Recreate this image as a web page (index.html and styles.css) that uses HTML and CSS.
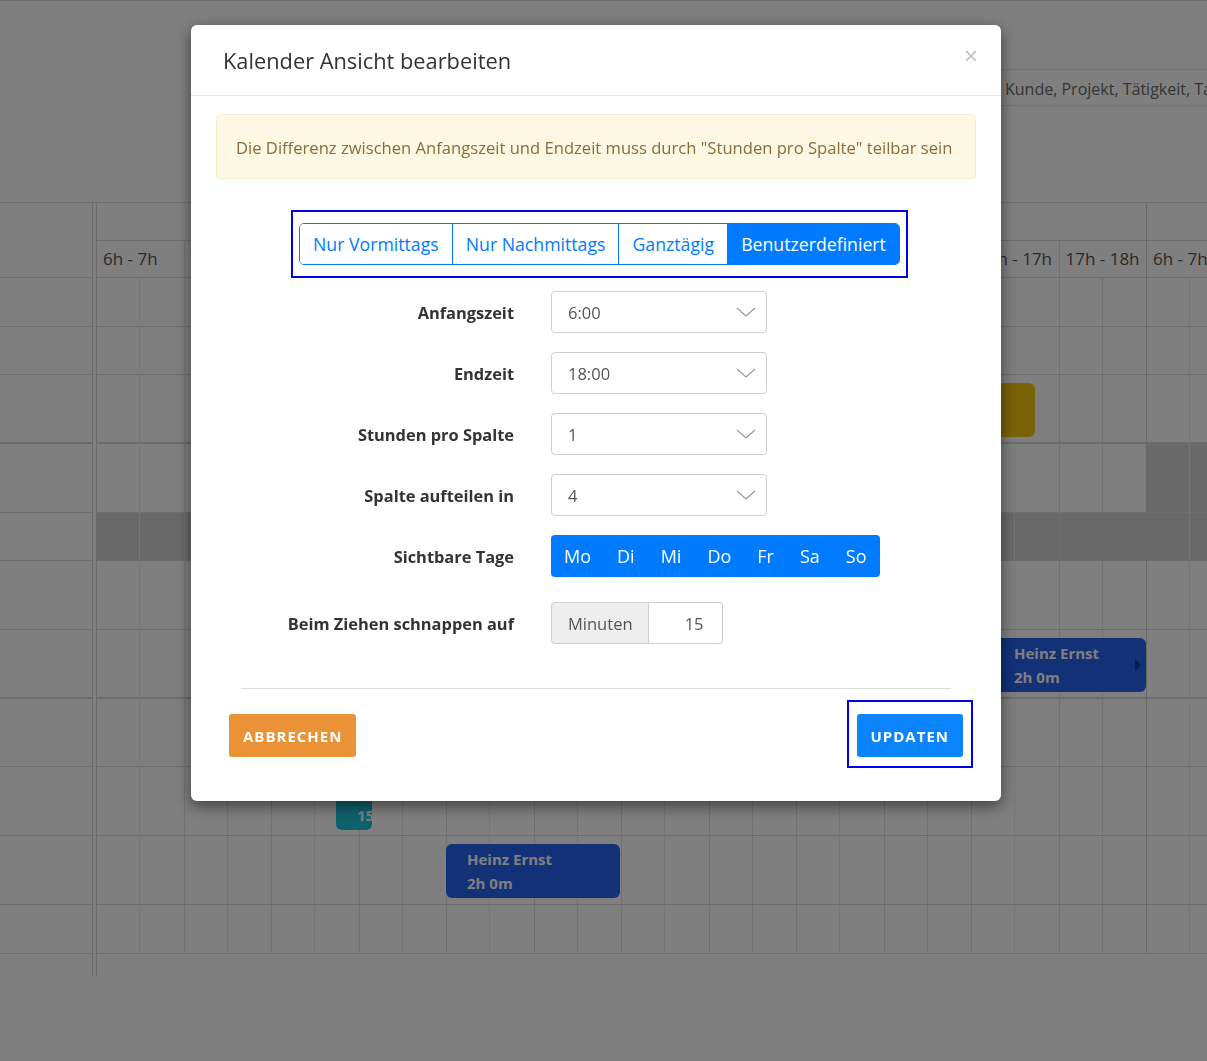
FILE: index.html
```html
<!DOCTYPE html>
<html lang="de">
<head>
    <meta charset="UTF-8">
    <meta name="viewport" content="width=device-width, initial-scale=1.0">
    <title>Kalender</title>
    <link rel="stylesheet" href="styles.css">
</head>
<body>
    <!-- Toolbar above the scheduler -->
    <div class="toolbar">
        <div class="group-select">Kunde, Projekt, Tätigkeit, Tag</div>
    </div>

    <!-- Scheduler: resource column, splitter, timeline -->
    <div class="scheduler">
        <div class="resources">
            <div class="res-head"></div>
            <div class="row h-49"></div>
            <div class="row h-48"></div>
            <div class="row h-69 group-end"></div>
            <div class="row h-69"></div>
            <div class="row h-48"></div>
            <div class="row h-69"></div>
            <div class="row h-69 group-end"></div>
            <div class="row h-68"></div>
            <div class="row h-69"></div>
            <div class="row h-69"></div>
            <div class="row h-49"></div>
        </div>
        <div class="splitter"></div>
        <div class="timeline">
            <div class="tl-head">
                <div class="days">
                    <div class="day"></div>
                    <div class="day"></div>
                </div>
                <div class="hours">
                    <div class="hour">6h - 7h</div>
                    <div class="hour">7h - 8h</div>
                    <div class="hour">8h - 9h</div>
                    <div class="hour">9h - 10h</div>
                    <div class="hour">10h - 11h</div>
                    <div class="hour">11h - 12h</div>
                    <div class="hour">12h - 13h</div>
                    <div class="hour">13h - 14h</div>
                    <div class="hour">14h - 15h</div>
                    <div class="hour">15h - 16h</div>
                    <div class="hour">16h - 17h</div>
                    <div class="hour day-end">17h - 18h</div>
                    <div class="hour">6h - 7h</div>
                    <div class="hour">7h - 8h</div>
                </div>
            </div>
            <div class="tl-body">
                <div class="tl-rows">
                    <div class="row h-49"></div>
                    <div class="row h-48"></div>
                    <div class="row h-69 group-end">
                        <div class="event event-yellow" style="left: 525px; width: 413px;"></div>
                    </div>
                    <div class="row h-69"><div class="off-hours"></div></div>
                    <div class="row h-48 closed"></div>
                    <div class="row h-69"></div>
                    <div class="row h-69 group-end">
                        <div class="event event-blue" style="left: 896px; width: 153px;">
                            Heinz Ernst<br>2h 0m
                            <span class="more"></span>
                        </div>
                    </div>
                    <div class="row h-68"></div>
                    <div class="row h-69">
                        <div class="event event-teal" style="left: 239px; width: 36px;">Heinz Ernst<br>15m</div>
                    </div>
                    <div class="row h-69">
                        <div class="event event-blue" style="left: 349px; width: 174px;">Heinz Ernst<br>2h 0m</div>
                    </div>
                    <div class="row h-49"></div>
                </div>
                <div class="tl-cols">
                    <div class="col"><span></span></div>
                    <div class="col"><span></span></div>
                    <div class="col"><span></span></div>
                    <div class="col"><span></span></div>
                    <div class="col"><span></span></div>
                    <div class="col"><span></span></div>
                    <div class="col"><span></span></div>
                    <div class="col"><span></span></div>
                    <div class="col"><span></span></div>
                    <div class="col"><span></span></div>
                    <div class="col"><span></span></div>
                    <div class="col day-end"><span></span></div>
                    <div class="col"><span></span></div>
                    <div class="col"><span></span></div>
                </div>
            </div>
        </div>
    </div>

    <!-- Modal: edit calendar view -->
    <div class="backdrop"></div>
    <div class="modal">
        <div class="modal-dialog">
            <div class="modal-header">
                <h4>Kalender Ansicht bearbeiten</h4>
                <button class="close">&times;</button>
            </div>
            <div class="modal-body">
                <div class="alert">Die Differenz zwischen Anfangszeit und Endzeit muss durch "Stunden pro Spalte" teilbar sein</div>

                <div class="focus-box presets">
                    <div class="btn-group">
                        <button>Nur Vormittags</button>
                        <button>Nur Nachmittags</button>
                        <button>Ganztägig</button>
                        <button class="active">Benutzerdefiniert</button>
                    </div>
                </div>

                <div class="form">
                    <label>Anfangszeit</label>
                    <div class="select">6:00
                        <svg width="20" height="10" viewBox="0 0 20 10"><polyline points="1,1 10,9 19,1" fill="none" stroke="#9a9a9a" stroke-width="1.2"/></svg>
                    </div>

                    <label>Endzeit</label>
                    <div class="select">18:00
                        <svg width="20" height="10" viewBox="0 0 20 10"><polyline points="1,1 10,9 19,1" fill="none" stroke="#9a9a9a" stroke-width="1.2"/></svg>
                    </div>

                    <label>Stunden pro Spalte</label>
                    <div class="select">1
                        <svg width="20" height="10" viewBox="0 0 20 10"><polyline points="1,1 10,9 19,1" fill="none" stroke="#9a9a9a" stroke-width="1.2"/></svg>
                    </div>

                    <label>Spalte aufteilen in</label>
                    <div class="select">4
                        <svg width="20" height="10" viewBox="0 0 20 10"><polyline points="1,1 10,9 19,1" fill="none" stroke="#9a9a9a" stroke-width="1.2"/></svg>
                    </div>

                    <label>Sichtbare Tage</label>
                    <div class="days-group">
                        <span>Mo</span><span>Di</span><span>Mi</span><span>Do</span><span>Fr</span><span>Sa</span><span>So</span>
                    </div>

                    <label class="snap-label">Beim Ziehen schnappen auf</label>
                    <div class="input-group snap">
                        <span class="addon">Minuten</span>
                        <span class="value">15</span>
                    </div>
                </div>

                <hr>
            </div>
            <div class="modal-footer">
                <button class="btn btn-cancel">Abbrechen</button>
                <div class="focus-box">
                    <button class="btn btn-update">Updaten</button>
                </div>
            </div>
        </div>
    </div>
</body>
</html>
```

FILE: styles.css
```css
* {
    box-sizing: border-box;
}
body {
    margin: 0;
    height: 1061px;
    overflow: hidden;
    font-family: "Open Sans", Arial, sans-serif;
    background-color: #fff;
    color: #555;
}

/* Toolbar */
.toolbar {
    height: 203px;
    border-top: 1px solid #e2e2e2;
    border-bottom: 1px solid #dcdcdc;
    padding-top: 68px;
    overflow: hidden;
}
.group-select {
    margin-left: 990px;
    width: 400px;
    height: 37px;
    border: 1px solid #e6e6e6;
    padding: 2px 14px 0;
    font-size: 16px;
    line-height: 35px;
    color: #6a6a6a;
    white-space: nowrap;
}

/* Scheduler */
.scheduler {
    display: flex;
    height: 773px;
}
.resources {
    width: 93px;
    flex: none;
    border-right: 1px solid #d4d4d4;
}
.res-head {
    height: 75px;
    border-bottom: 1px solid #dcdcdc;
}
.splitter {
    width: 3px;
    flex: none;
}
.timeline {
    flex: 1;
    overflow: hidden;
    border-left: 1px solid #d4d4d4;
}
.row {
    position: relative;
    border-bottom: 1px solid #dcdcdc;
}
.row.group-end {
    border-bottom: 2px solid #d6d6d6;
}
.h-48 { height: 48px; }
.h-49 { height: 49px; }
.h-68 { height: 68px; }
.h-69 { height: 69px; }

.tl-head {
    width: 1225px;
}
.days {
    display: flex;
    height: 38px;
    border-bottom: 1px solid #dcdcdc;
}
.day {
    width: 1050px;
    flex: none;
    border-right: 1px solid #d0d0d0;
}
.hours {
    display: flex;
    height: 37px;
    border-bottom: 1px solid #dcdcdc;
}
.hour {
    width: 87.5px;
    flex: none;
    overflow: hidden;
    white-space: nowrap;
    border-right: 1px solid #e0e0e0;
    padding-left: 6px;
    font-size: 17px;
    line-height: 36px;
    color: #555;
}
.hour.day-end {
    border-right-color: #d0d0d0;
}

.tl-body {
    display: grid;
    width: 1225px;
}
.tl-rows,
.tl-cols {
    grid-area: 1 / 1;
}
.tl-cols {
    display: flex;
    position: relative;
    z-index: 1;
}
.col {
    width: 87.5px;
    flex: none;
    border-right: 1px solid #e0e0e0;
}
.col span {
    display: block;
    width: 50%;
    height: 100%;
    border-right: 1px solid #ececec;
}
.col:nth-child(even) span {
    border-right: 1px dotted #d0d0d0;
}
.col.day-end {
    border-right-color: #d0d0d0;
}
.row.closed {
    background-color: #d2d2d2;
}
.off-hours {
    margin-left: 1050px;
    height: 100%;
    background-color: #d2d2d2;
}

/* Events on the timeline */
.event {
    position: absolute;
    top: 8px;
    height: 54px;
    z-index: 2;
    border-radius: 6px;
    padding: 3px 21px;
    color: #fff;
    font-weight: 700;
    font-size: 15px;
    line-height: 24px;
    white-space: nowrap;
}
.event-blue {
    background-color: #2462ef;
}
.event-yellow {
    background-color: #f2c40f;
}
.event-teal {
    top: 9px;
    padding-right: 0;
    background-color: #1fc2da;
}
.event .more {
    position: absolute;
    right: 5px;
    top: 21px;
    border-left: 6px solid #14389f;
    border-top: 6px solid transparent;
    border-bottom: 6px solid transparent;
}

/* Modal */
.backdrop {
    position: fixed;
    top: 0;
    left: 0;
    right: 0;
    bottom: 0;
    background-color: rgba(0, 0, 0, 0.5);
    z-index: 10;
}
.modal {
    position: fixed;
    top: 0;
    left: 0;
    right: 0;
    bottom: 0;
    z-index: 11;
    font-family: "Open Sans", Arial, sans-serif;
}
.modal-dialog {
    width: 810px;
    margin: 25px 0 0 191px;
    background-color: #fff;
    border-radius: 6px;
    box-shadow: 0 5px 15px rgba(0, 0, 0, 0.5);
}
.modal-header {
    display: flex;
    justify-content: space-between;
    align-items: flex-start;
    padding: 21px 23px 19px 32px;
    border-bottom: 1px solid #e5e5e5;
}
.modal-header h4 {
    margin: 0;
    font-size: 21.8px;
    font-weight: 400;
    line-height: 30px;
    color: #333;
}
.close {
    margin-top: 0;
    padding: 0;
    border: none;
    background: none;
    font-size: 24px;
    line-height: 20px;
    color: #c2c2c2;
    font-family: Arial, sans-serif;
}
.modal-body {
    padding: 18px 25px 0;
}
.alert {
    padding: 21px 19px 19px;
    border: 1px solid #faebcc;
    border-radius: 4px;
    background-color: #fcf8e3;
    color: #8a6d3b;
    font-size: 16.6px;
    line-height: 23px;
    margin-bottom: 31px;
}
.focus-box {
    border: 2px solid #0000f0;
}
.presets {
    display: flex;
    width: max-content;
    margin-left: 75px;
    padding: 11px 6px;
}
.btn-group {
    display: flex;
    height: 42px;
    border: 1px solid #007bff;
    border-radius: 5px;
    overflow: hidden;
}
.btn-group button {
    border: none;
    border-left: 1px solid #007bff;
    background: #fff;
    color: #007bff;
    font-family: inherit;
    font-size: 17.7px;
    padding: 0 13px;
}
.btn-group button:first-child {
    border-left: none;
}
.btn-group button.active {
    background-color: #007bff;
    color: #fff;
}

.form {
    display: grid;
    grid-template-columns: 298px auto;
    column-gap: 37px;
    row-gap: 19px;
    margin-top: 13px;
    align-items: center;
    justify-items: start;
}
.form label {
    justify-self: end;
    font-size: 16.4px;
    font-weight: 700;
    color: #333;
}
.select {
    width: 216px;
    height: 42px;
    display: flex;
    justify-content: space-between;
    align-items: center;
    padding: 0 10px 0 16px;
    border: 1px solid #cfcfcf;
    border-radius: 4px;
    font-size: 16.5px;
    color: #555;
}
.days-group {
    display: flex;
    height: 42px;
    align-items: center;
    background-color: #007bff;
    border-radius: 4px;
    color: #fff;
    font-size: 18px;
}
.days-group span {
    padding: 0 13px;
}
.form .snap-label,
.snap {
    margin-top: 6px;
}
.input-group {
    display: flex;
    height: 42px;
    font-size: 16.5px;
    color: #555;
}
.input-group .addon {
    display: flex;
    align-items: center;
    padding: 0 15px 0 16px;
    background-color: #eee;
    border: 1px solid #cfcfcf;
    border-radius: 4px 0 0 4px;
}
.input-group .value {
    display: flex;
    align-items: center;
    justify-content: flex-end;
    width: 74px;
    padding-right: 18px;
    border: 1px solid #cfcfcf;
    border-left: none;
    border-radius: 0 4px 4px 0;
}
.modal-body hr {
    margin: 44px 25px 0;
    border: none;
    border-top: 1px solid #dcdcdc;
}
.modal-footer {
    display: flex;
    justify-content: space-between;
    align-items: flex-start;
    padding: 11px 28px 33px 38px;
}
.modal-footer .focus-box {
    padding: 12px 8px 9px;
}
.btn {
    height: 43px;
    border: none;
    border-radius: 3px;
    color: #fff;
    font-family: inherit;
    font-size: 15px;
    font-weight: 700;
    letter-spacing: 1px;
    text-transform: uppercase;
    padding: 0 14px;
}
.btn-cancel {
    margin-top: 14px;
    background-color: #ec9236;
}
.btn-update {
    background-color: #0b84ff;
}
```
